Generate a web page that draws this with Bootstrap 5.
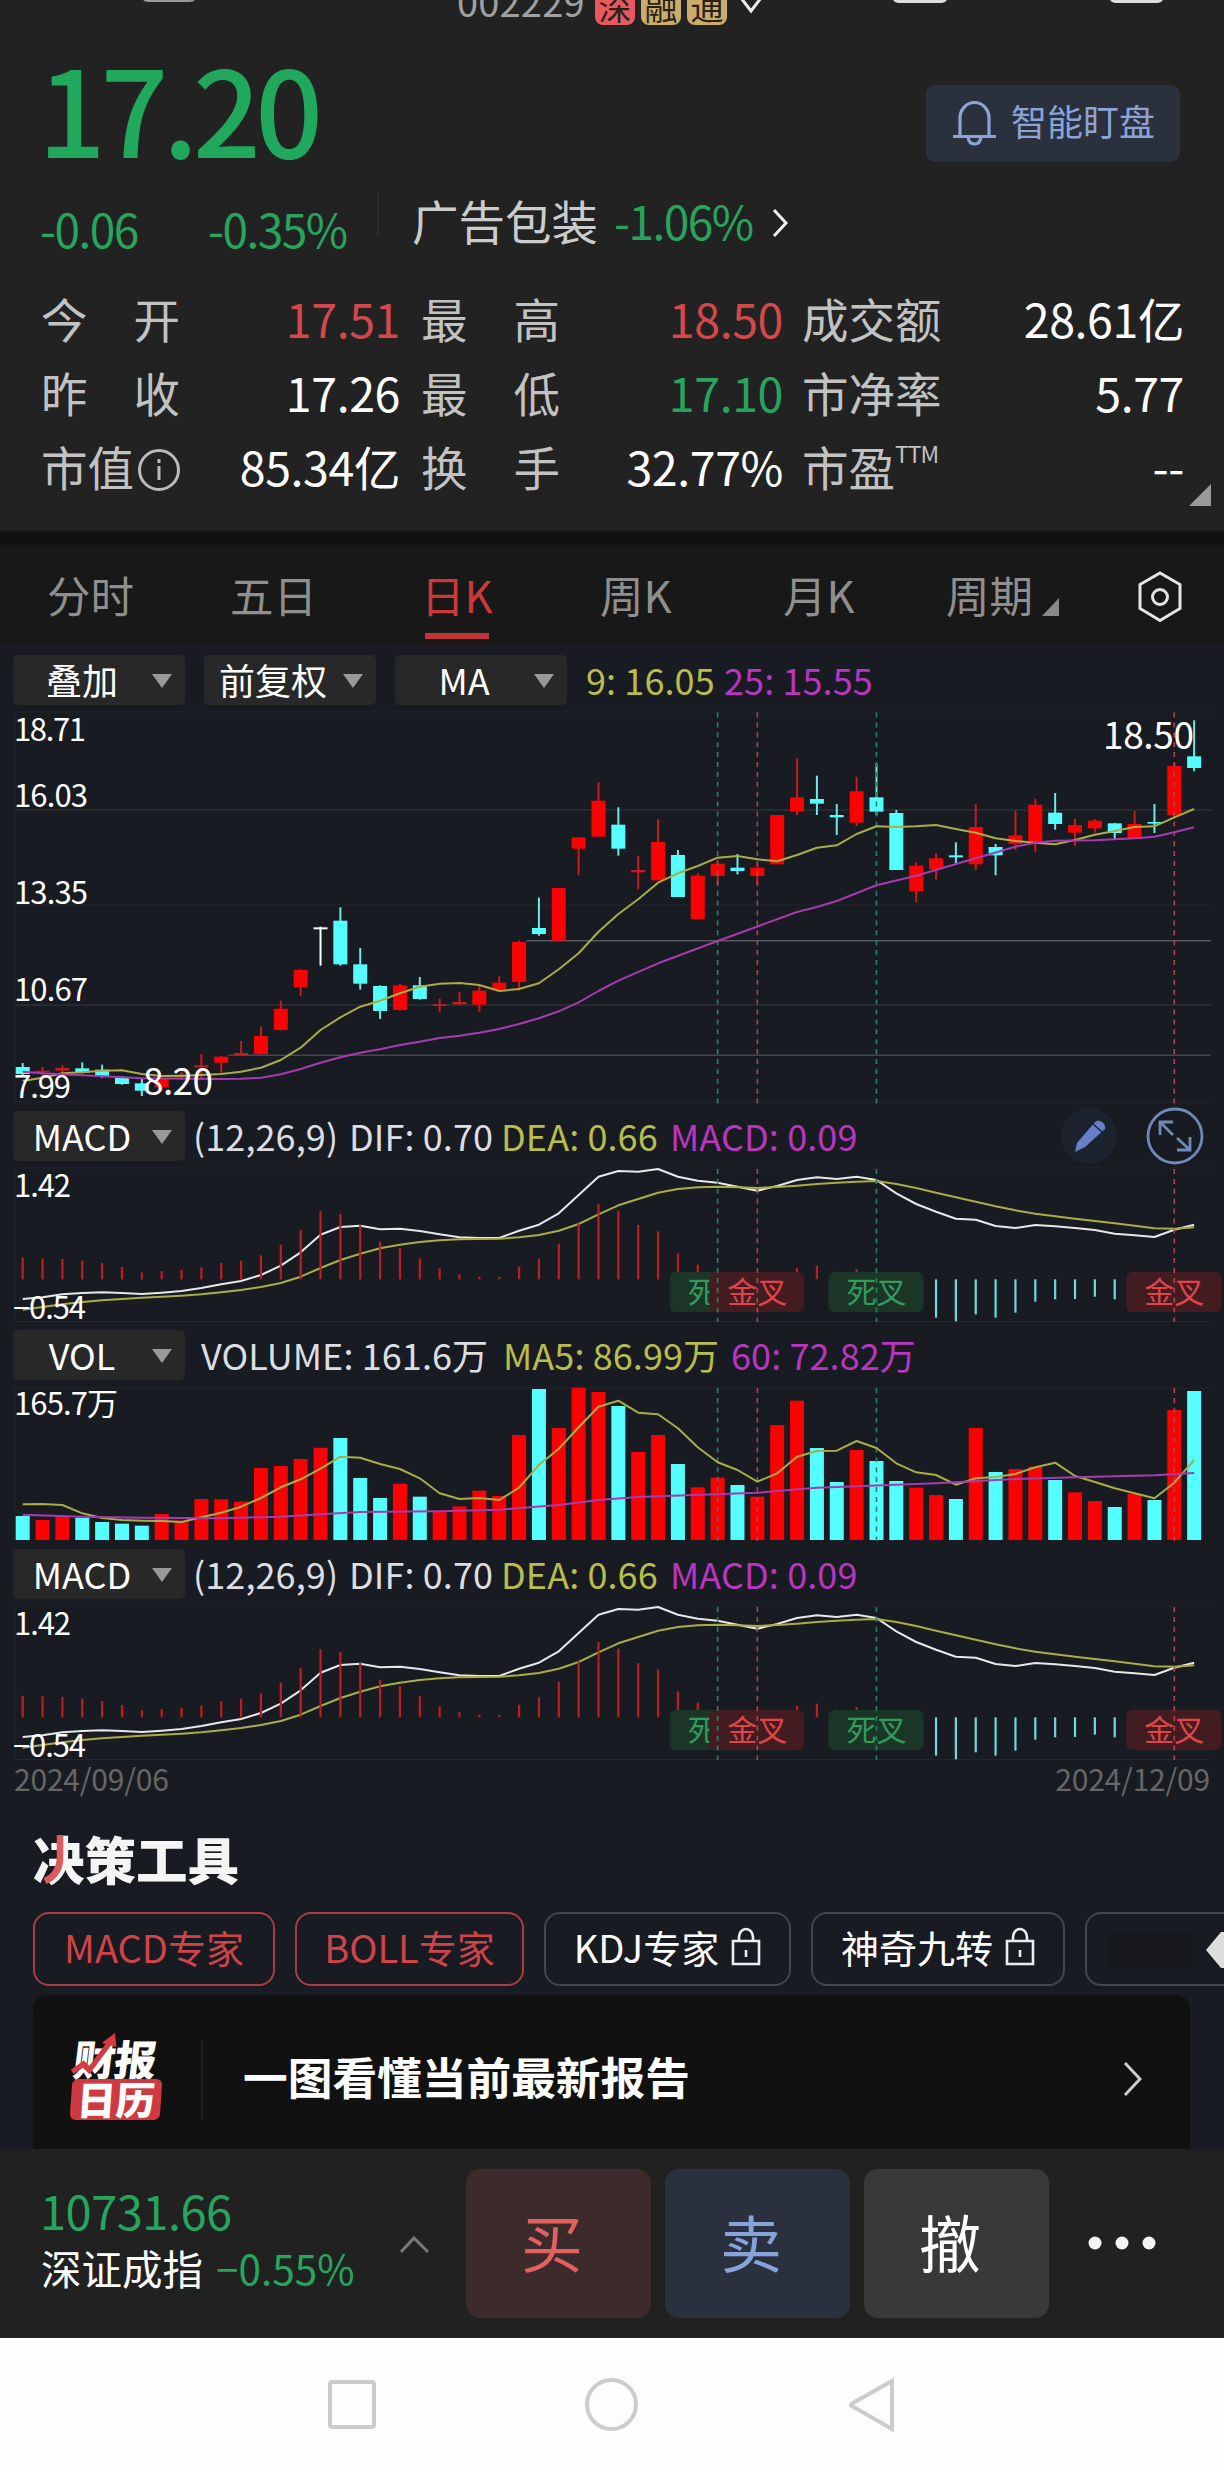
<!DOCTYPE html>
<html lang="zh-CN">
<head>
<meta charset="utf-8">
<meta name="viewport" content="width=device-width, initial-scale=1">
<title>002229 日K</title>
<link href="https://cdn.jsdelivr.net/npm/bootstrap@5.3.0/dist/css/bootstrap.min.css" rel="stylesheet">
<style>
body{background:#181b22;color:#fff;font-family:"Noto Sans CJK SC","Noto Sans",sans-serif;width:1224px;overflow-x:hidden}
svg{display:block;flex:none}
.up{color:#d2484b}.down{color:#26a55e}.yel{color:#b9bd49}.pur{color:#b836c0}
.quote{height:531px;background:#222;overflow:hidden}
.titlebar{height:26px;position:relative;overflow:hidden}
.code-line{height:60px;margin-top:-35px;padding-left:457px}
.code-no{font-size:38px;line-height:50px;color:#a0a0a0;width:138px;letter-spacing:.2px;padding-top:12px}
.tagbox{width:40px;height:44px;border-radius:8px;font-size:33px;line-height:50px;text-align:center;color:#2a2118;background:#c9ad6c;margin-right:6px;overflow:hidden}
.tagbox.sz{background:#e8585e}
.price-row{height:150px;padding:0 44px 0 40px}
.price{font-size:119px;line-height:150px;font-weight:500;color:#20a95c;letter-spacing:-5.4px;padding-top:5px;margin-left:-2px}
.watch-btn{width:254px;height:77px;margin-top:59px;border-radius:9px;background:#2b303d;color:#8ba3d6;font-size:36px;line-height:70px;padding-left:27px;gap:14px}
.chg-row{height:74px;margin-top:10px;padding:4px 0 0 40px;font-size:46px;line-height:60px;letter-spacing:-1.5px}
.c1{width:168px}.c2{width:169px}
.c3{width:235px;padding-left:33px;color:#ccc;letter-spacing:0;font-size:46.5px}
.vline{width:2px;background:#2b2b2b}
.facts{padding:24px 40px 0 41px}
.fact-row{height:74px;font-size:46.5px;line-height:68px}
.fact-row>div{display:flex;justify-content:space-between}
.f1{width:359px;margin-right:21px}.f2{width:362px;margin-right:19px}.f3{width:382px}
.lab{width:139px;display:flex;justify-content:space-between;color:#c2c2c2;white-space:nowrap}
.num{letter-spacing:-.4px;white-space:nowrap}
.corner{height:22px;padding-right:13px;margin-top:-22px}
.ttm{font-size:23px;line-height:42px;letter-spacing:-1px;margin-right:auto}
.strip{height:14px;background:#111}
.tabs-row{height:100px;background:#181818;font-size:43.5px;line-height:99px;color:#8f8f8f;padding-left:47px}
.tabs-row>div{width:183px;white-space:nowrap}
.tabs-row>.tab-last{width:191px;margin-left:-16px}
.tab-on{color:#cf3838;position:relative}
.tab-on::after{content:"";position:absolute;left:12px;top:88px;width:64px;height:6px;background:#bf3434}
.tool-row{height:60px;padding:10px 0 0 13px;font-size:36px}
.sel{width:172px;height:50px;background:#282828;border-radius:5px;margin-right:19px;line-height:49px;flex:none;padding-right:12px}
.sel .t{flex:1;text-align:center}
.legend{line-height:49px;white-space:nowrap;letter-spacing:.1px}
.ind-row{height:50px;padding-left:13px;font-size:36px;color:#dcdee2}
.ind-row .sel{margin-right:8px;color:#fff}
.legend span{display:inline-block}
.w-par{width:156px}.w-dif{width:152px}.w-dea{width:169px}.w-vol{width:302px}.w-ma5{width:228px}.w-9{width:138px}
.dates{height:45px;padding:0 14px;font-size:30px;line-height:32px;color:#666;letter-spacing:-.2px}
.tools{height:188px;padding-left:33px}
.tools-h{font-size:51.5px;font-weight:900;line-height:75px;height:105px;color:#f4f4f4;position:relative;padding-top:13px}
.tools-h svg{position:absolute;left:9px;top:28px}
.chip{height:74px;border:2px solid #43464d;border-radius:16px;font-size:38px;line-height:66px;margin-right:20px;flex:none;white-space:nowrap;justify-content:center;gap:12px}
.chip.on{border-color:#a83d44;color:#cf4449}
.report{height:154px;margin:0 34px 0 33px;background:#111;border-radius:14px 14px 0 0}
.mark-a{font-size:42px;line-height:43px;font-weight:900;transform:skewX(-7deg);letter-spacing:-1px;position:relative;padding-left:3px}
.mark-a svg{position:absolute;left:0;top:-4px}
.mark-b{background:#cf3a40;border-radius:6px;width:90px;height:41px;font-size:39px;font-weight:900;line-height:38px;text-align:center;transform:skewX(-4deg)}
.logo-box{width:94px;margin-left:38px;padding-top:41px}
.report-t{font-size:44.7px;font-weight:700;line-height:162px;padding-left:40px}
.trade{height:189px;background:#212121;padding-left:41px}
.idx{width:359px}
.idx-a{font-size:47px;line-height:50px;padding-top:36px;letter-spacing:-.5px;margin-left:-1px}
.idx-b{font-size:40.5px;line-height:60px;padding-top:3px;white-space:nowrap}
.idx-b .down{margin-left:4px}
.act{width:185px;height:149px;border-radius:14px;margin:20px 14px 0 0;font-size:62px;line-height:144px;text-align:center;padding-right:13px;flex:none}
.buy{background:#3d2a2a;color:#e2605f}.sell{background:#2a303d;color:#86a3dc}.cancel{background:#393939}
.sysnav{height:134px;background:#fdfdfd}
svg text{font-family:"Noto Sans CJK SC",sans-serif;fill:#fff}
</style>
</head>
<body>
<section class="quote">
  <div class="titlebar">
    <div class="d-flex code-line">
      <div class="code-no d-flex align-items-center">002229</div>
      <div class="tagbox sz mt-3">深</div><div class="tagbox mt-3">融</div><div class="tagbox mt-3">通</div>
      <svg width="36" height="60"><path d="M5 29l13 17 13-17" fill="none" stroke="#eee" stroke-width="3"/></svg>
    </div>
    <svg class="position-absolute top-0 start-0" width="1224" height="5"><path d="M143 0h52q-2 2-5 2h-42q-3 0-5-2z" fill="#999"/><path d="M893 0h54q-2 3-5 3h-44q-3 0-5-3zM1110 0h53q-2 3-5 3h-43q-3 0-5-3z" fill="#ddd"/></svg>
  </div>
  <div class="price-row d-flex justify-content-between">
    <div class="price">17.20</div>
    <div class="watch-btn d-flex"><svg width="44" height="77" fill="none" stroke="#8ba3d6" stroke-width="3.200"><path d="M7 51V33a14.500 15.500 0 0 1 29 0v18M0 51.500h43"/><path d="M15 52q1 7 6.500 7t6.500-7"/></svg><span>智能盯盘</span></div>
  </div>
  <div class="chg-row d-flex">
    <div class="c1 down pt-2">-0.06</div><div class="c2 down pt-2">-0.35%</div>
    <div class="vline mb-4"></div><div class="c3">广告包装</div><div class="down">-1.06%</div>
    <svg width="40" height="60" class="ms-3"><path d="M5 20l12 13-12 13" fill="none" stroke="#eee" stroke-width="3"/></svg>
  </div>
  <div class="facts">
    <div class="fact-row d-flex"><div class="f1"><span class="lab"><i class="fst-normal">今</i><i class="fst-normal">开</i></span><span class="num up">17.51</span></div><div class="f2"><span class="lab"><i class="fst-normal">最</i><i class="fst-normal">高</i></span><span class="num up">18.50</span></div><div class="f3"><span class="lab">成交额</span><span class="num">28.61亿</span></div></div>
    <div class="fact-row d-flex"><div class="f1"><span class="lab"><i class="fst-normal">昨</i><i class="fst-normal">收</i></span><span class="num">17.26</span></div><div class="f2"><span class="lab"><i class="fst-normal">最</i><i class="fst-normal">低</i></span><span class="num down">17.10</span></div><div class="f3"><span class="lab">市净率</span><span class="num">5.77</span></div></div>
    <div class="fact-row d-flex"><div class="f1"><span class="lab">市值<svg width="46" height="70" fill="none" stroke="#bbb" stroke-width="3"><circle cx="25" cy="38" r="19.500"/><path d="M25 34v14M25 27v4"/></svg></span><span class="num">85.34亿</span></div><div class="f2"><span class="lab"><i class="fst-normal">换</i><i class="fst-normal">手</i></span><span class="num">32.77%</span></div><div class="f3"><span class="lab">市盈<span class="ttm">TTM</span></span><span class="num">--</span></div></div>
  </div>
  <div class="corner d-flex justify-content-end"><svg width="22" height="22"><path d="M0 22L22 0v22z" fill="#999"/></svg></div>
</section>
<div class="strip"></div>
<nav class="tabs-row d-flex">
  <div>分时</div><div>五日</div><div class="tab-on ps-2">日K</div><div class="ps-1">周K</div><div class="ps-1">月K</div>
  <div class="tab-last d-flex">周期<svg width="28" height="92"><path d="M9 71L26 53v18z" fill="#888"/></svg></div>
  <svg width="50" height="100" fill="none" stroke="#e4e4e4" stroke-width="3"><path d="M14 39.500l20-11.500 20 11.500v24L34 75.500 14 63.500z" transform="translate(-11)"/><circle cx="23" cy="52" r="7.500"/></svg>
</nav>
<div class="tool-row d-flex">
  <div class="sel d-flex"><span class="t">叠加</span><svg width="22" height="50"><path d="M1 19h20L11 33z" fill="#999"/></svg></div>
  <div class="sel d-flex"><span class="t">前复权</span><svg width="22" height="50"><path d="M1 19h20L11 33z" fill="#999"/></svg></div>
  <div class="sel d-flex"><span class="t">MA</span><svg width="22" height="50"><path d="M1 19h20L11 33z" fill="#999"/></svg></div>
  <div class="legend"><span class="yel w-9">9: 16.05</span><span class="pur">25: 15.55</span></div>
</div>
<svg id="kline" width="1224" height="406" viewBox="0 705 1224 406"></svg>
<div class="ind-row d-flex">
  <div class="sel d-flex"><span class="t">MACD</span><svg width="22" height="50"><path d="M1 19h20L11 33z" fill="#999"/></svg></div>
  <div class="legend"><span class="w-par">(12,26,9)</span><span class="w-dif">DIF: 0.70</span><span class="yel w-dea">DEA: 0.66</span><span class="pur">MACD: 0.09</span></div>
  <svg width="150" height="58" class="ms-auto overflow-visible" viewBox="0 0 150 58"><circle cx="15" cy="25" r="28" fill="#1c222e"/><path d="M1 41l2-9L21 11q3-3 7 0t3 7L11 36z" fill="#6580c8"/><path d="M19 13l9 8" stroke="#1c222e" stroke-width="1.500"/><g fill="none" stroke="#7089b8" stroke-width="2.800"><circle cx="101" cy="25" r="27"/><path d="M86 24V11h13M86 11l13 13M116 26v13h-13M116 39L103 27"/></g></svg>
</div>
<svg class="macd" width="1224" height="169" viewBox="0 1161 1224 169"></svg>
<div class="ind-row d-flex">
  <div class="sel d-flex"><span class="t">VOL</span><svg width="22" height="50"><path d="M1 19h20L11 33z" fill="#999"/></svg></div>
  <div class="legend ps-2"><span class="w-vol">VOLUME: 161.6万</span><span class="yel w-ma5">MA5: 86.99万</span><span class="pur">60: 72.82万</span></div>
</div>
<svg id="vol" width="1224" height="169" viewBox="0 1380 1224 169"></svg>
<div class="ind-row d-flex">
  <div class="sel d-flex"><span class="t">MACD</span><svg width="22" height="50"><path d="M1 19h20L11 33z" fill="#999"/></svg></div>
  <div class="legend"><span class="w-par">(12,26,9)</span><span class="w-dif">DIF: 0.70</span><span class="yel w-dea">DEA: 0.66</span><span class="pur">MACD: 0.09</span></div>
</div>
<svg class="macd" width="1224" height="163" viewBox="0 1161 1224 163"></svg>
<div class="dates d-flex justify-content-between"><span>2024/09/06</span><span>2024/12/09</span></div>
<section class="tools overflow-hidden">
  <div class="tools-h">决策工具<svg width="40" height="60"><path d="M18 0V24Q17 40 3 46" fill="none" stroke="#dc5a5a" stroke-width="6.500"/></svg></div>
  <div class="d-flex">
    <div class="chip on d-flex" style="width:242px">MACD专家</div>
    <div class="chip on d-flex" style="width:229px">BOLL专家</div>
    <div class="chip d-flex" style="width:247px">KDJ专家<svg width="30" height="64" fill="none" stroke="#eee" stroke-width="2.600"><path d="M2 27h26v23H2zM8 27v-4a7 8 0 0 1 14 0v4M15 36v7"/></svg></div>
    <div class="chip d-flex" style="width:254px">神奇九转<svg width="30" height="64" fill="none" stroke="#eee" stroke-width="2.600"><path d="M2 27h26v23H2zM8 27v-4a7 8 0 0 1 14 0v4M15 36v7"/></svg></div>
    <div class="chip me-0" style="width:160px"><svg width="139" height="70"><path d="M22 20h84v34H22z" fill="#17181c"/><path d="M119 36L134 18h5v36h-5z" fill="#ddd"/></svg></div>
  </div>
</section>
<section class="report d-flex">
  <div class="logo-box"><div class="mark-a">财报<svg width="52" height="46"><path d="M3 40l10-8 7 6L38 9" fill="none" stroke="#d43a40" stroke-width="5.500"/><path d="M29 11L41 1l3 14z" fill="#d43a40"/></svg></div><div class="mark-b">日历</div></div>
  <div class="vline" style="height:80px;margin:44px 0 0 36px;background:#1f1f1f"></div>
  <div class="report-t">一图看懂当前最新报告</div>
  <svg width="30" height="154" class="ms-auto me-5"><path d="M10 68l15 16-15 16" transform="translate(3)" fill="none" stroke="#ccc" stroke-width="3"/></svg>
</section>
<section class="trade d-flex">
  <div class="idx"><div class="idx-a down">10731.66</div><div class="idx-b">深证成指 <span class="down">−0.55%</span></div></div>
  <svg width="66" height="189"><path d="M1 103l13-14 14 14" fill="none" stroke="#777" stroke-width="3"/></svg>
  <div class="act buy">买</div><div class="act sell">卖</div><div class="act cancel">撤</div>
  <svg width="110" height="189" fill="#f4f4f4"><circle cx="32" cy="94" r="6.500"/><circle cx="59" cy="94" r="6.500"/><circle cx="86" cy="94" r="6.500"/></svg>
</section>
<footer class="sysnav"><svg width="1224" height="134" fill="none" stroke="#ccc" stroke-width="4"><rect x="330" y="44" width="44" height="45" rx="2"/><circle cx="611.500" cy="66.500" r="24.500"/><path d="M892 43v48L852 68q-2-1 0-2.500z"/></svg></footer>
<script src="https://cdn.jsdelivr.net/npm/bootstrap@5.3.0/dist/js/bootstrap.bundle.min.js"></script>
<script>
const X = i => +(22.7 + i * 19.855).toFixed(2);
const RED = '#fb0202', CY = '#55ffff', YEL = '#a9ad45', PUR = '#a63bb0';
const line = (x1,y1,x2,y2,c,w,extra='') => `<line x1="${x1}" y1="${y1}" x2="${x2}" y2="${y2}" stroke="${c}" stroke-width="${w}" ${extra}/>`;
const label = (x,y,w,s,t,extra='') => `<text x="${x}" y="${y}" font-size="${s}" textLength="${w}" ${extra}>${t}</text>`;
// points: [index, value] pairs joined into one polyline
const curve = (pts, f, c) => `<polyline fill="none" stroke="${c}" stroke-width="2" stroke-linejoin="round" points="${pts.map(p => X(p[0]) + ',' + f(p[1]).toFixed(1)).join(' ')}"/>`;
const seq = a => a.map((v,i) => [i,v]);
const marks = (y1,y2) => [[35,'#238468'],[37,'#b0444f'],[43,'#238468'],[58,'#b0444f']].map(([i,c]) => line(X(i),y1,X(i),y2,c,1.6,'stroke-dasharray="5 4.9"')).join('');

// daily candles: colour, high, body top, body bottom, low
const K = [['c',1089,1101,1122,1126],['d',1101,1112,1117,1126],['d',1096,1104,1112,1124],['c',1087,1105,1118,1120],['c',1094,1109,1129,1133],['c',1128,1133,1152,1154],['c',1135,1150,1172,1188],['r',1130,1135,1162,1172],['d',1115,1125,1132,1140],['d',1062,1096,1102,1135],['r',1068,1070,1088,1118],['d',1023,1059,1066,1066],['r',980,1008,1062,1066],['r',902,926,990,992],['r',808,810,861,888],['w',680,682,688,797],['c',622,662,793,797],['c',744,793,851,869],['c',856,858,933,957],['r',852,856,930,932],['c',831,856,897,899],['d',896,913,918,937],['d',876,906,913,915],['r',855,872,914,935],['r',829,848,868,870],['r',722,726,846,872],['c',593,684,702,707],['r',564,564,722,722],['r',412,412,446,526],['r',247,302,410,410],
['c',322,374,446,467],['d',467,510,517,568],['r',358,426,541,541],['c',450,465,591,591],['r',520,527,657,657],['r',480,491,528,556],['c',462,503,513,523],['r',492,503,528,556],['r',345,345,493,493],['r',175,292,335,346],['c',227,297,311,345],['c',312,345,352,405],['r',230,274,368,378],['c',190,292,335,346],['c',330,339,510,510],['r',487,497,573,607],['r',460,475,508,538],['c',427,466,472,490],['r',312,381,493,510],['c',432,441,466,526],['r',333,406,432,450],['r',296,314,427,455],['c',279,338,372,389],['r',357,375,398,437],['r',357,362,385,398],['c',369,370,399,418],['r',333,372,416,416],['c',312,366,371,399],['r',188,198,345,356],['c',61,169,204,214]];
const ky = v => 700 + v/3;
const colr = {c:CY, r:RED, d:'#c51c20', w:'#fff'};
let s = '';
[[712,.35],[810,1],[905,.35],[1005,1],[1102,.35]].forEach(([y,o]) => s += line(15,y,1211,y,'#2c3036',1.3,`opacity="${o}"`));
s += line(15,712,15,1102,'#22252c',1) + line(X(25)+7,940.7,1211,940.7,'#55585c',1.6) + line(X(10)+7,1055.3,1211,1055.3,'#44474b',1.5);
K.forEach(([c,h,t,b,l],i) => {
  s += line(X(i),ky(h),X(i),ky(l),c==='c'?'#6fe9e9':c==='w'?'#fff':'#c91a1c',2);
  s += `<rect x="${X(i)-7}" y="${ky(t)}" width="14" height="${(b-t)/3}" fill="${colr[c]}"/>`;
});
s += marks(712.5,1104);
s += curve(seq([1143,1133,1120,1117,1112,1111,1122,1128,1127,1125,1122,1115,1103,1080,1043,990,952,920,902,880,860,851,849,855,873,867,850,808,760,695,642,598,548,520,498,473,468,478,484,465,443,436,402,379,381,379,375,387,398,415,423,428,433,420,404,393,381,379,352,327]), ky, YEL);
s += curve([[0,1115],[1,1120],[3,1126],[6,1135],[10,1137],[11,1136],[12,1133],[13,1123],[14,1107],[15,1088],[16,1072],[17,1058],[18,1048],[19,1035],[20,1025],[21,1014],[22,1007],[23,998],[24,987],[25,972],[26,955],[27,934],[28,907],[29,873],[30,842],[32,790],[35,723],[39,636],[40,621],[41,603],[43,556],[45,527],[48,475],[50,440],[51,428],[52,422],[54,421],[56,415],[57,410],[58,397],[59,382]], ky, PUR);
s += label(14,740.500,72,31,'18.71') + label(14,807,74,31,'16.03') + label(14,904,74,31,'13.35') + label(14,1001,74,31,'10.67') + label(14,1098,57,31,'7.99') + label(143,1095,70,37,'8.20') + label(1103,749,91,37,'18.50');
document.getElementById('kline').innerHTML = s;

// MACD: histogram, DIF and DEA
const my = v => 1100 + v/3, ZERO = 538;
const hist = [473,475,477,482,489,501,517,513,510,502,489,482,466,434,390,334,342,375,425,444,475,505,523,530,531,500,477,431,370,312,332,375,394,460,494,530,0,0,525,504,497,515,507,0,0,0,653,664,643,653,638,605,598,597,590,598];
let m = line(15,1168,1211,1168,'#20242b',1) + line(15,1168,15,1321,'#20242b',1) + line(15,1321.500,1211,1321.500,'#23262c',1);
m += curve(seq([597,592,583,579,577,579,582,578,573,564,553,543,525,497,457,404,381,377,388,386,393,403,412,414,414,392,374,340,285,230,213,215,207,230,242,248,260,272,258,240,232,237,230,240,280,312,335,356,359,378,384,375,379,384,390,401,406,411,389,374]), my, '#e8e8ea');
m += curve(seq([629,621,613,606,601,597,593,590,587,583,577,570,561,549,530,504,480,461,445,434,426,421,418,417,416,412,405,392,372,343,316,297,278,267,262,260,262,264,261,257,252,248,245,243,252,264,278,292,305,319,331,341,349,356,363,370,377,385,386,382]), my, YEL);
hist.forEach((v,i) => { if (v) m += line(X(i),my(v),X(i),my(ZERO),v>ZERO?'#6fd9dc':'#c01d22',2.2); });
const cross = (i,t,bg,fg) => `<rect x="${X(i)-48}" y="1272" width="95" height="40" rx="6" fill="${bg}"/>` + label(X(i)-30,1303,60,30,t,`style="fill:${fg}"`);
m += cross(35,'死叉','#1b3527','#319b5c') + cross(37,'金叉','#421c20','#e04448') + cross(43,'死叉','#1b3527','#319b5c') + cross(58,'金叉','#421c20','#e04448');
m += marks(1169,1322);
m += label(14,1196.500,57,31,'1.42') + label(13,1319,73,31,'−0.54');
document.querySelectorAll('.macd').forEach(e => e.innerHTML = m);

// volume bars, coloured like the candle of the same day
const V = [1248,1260,1248,1253,1266,1271,1277,1242,1262,1197,1198,1205,1104,1098,1077,1043,1014,1134,1194,1151,1190,1234,1219,1172,1188,1005,867,984,863,876,918,1056,1005,1092,1162,1133,1155,1190,975,902,1044,1146,1050,1083,1143,1163,1185,1197,984,1116,1107,1100,1140,1177,1203,1221,1182,1200,930,873];
let v = line(15,1388,1211,1388,'#20242b',1) + line(15,1388,15,1540,'#20242b',1);
V.forEach((t,i) => v += `<rect x="${X(i)-7}" y="${my(t)}" width="14" height="${(1320-t)/3}" fill="${K[i][0]==='c'?CY:RED}"/>`);
v += marks(1388,1541);
v += curve(seq([1213,1212,1215,1240,1254,1260,1262,1263,1266,1252,1238,1220,1194,1162,1138,1106,1070,1073,1092,1107,1135,1180,1197,1194,1200,1163,1095,1046,982,920,902,938,943,985,1042,1087,1110,1145,1120,1070,1053,1052,1023,1044,1090,1117,1125,1154,1135,1131,1122,1102,1088,1128,1146,1165,1180,1195,1148,1080]), my, YEL);
v += curve([[0,1244],[3,1250],[6,1253],[10,1255],[13,1250],[15,1243],[17,1236],[21,1234],[24,1229],[27,1215],[29,1200],[31,1191],[37,1178],[40,1163],[46,1150],[50,1137],[53,1132],[57,1126],[59,1119]], my, PUR);
v += label(14,1415,104,31,'165.7万');
document.getElementById('vol').innerHTML = v;
</script>
</body>
</html>
